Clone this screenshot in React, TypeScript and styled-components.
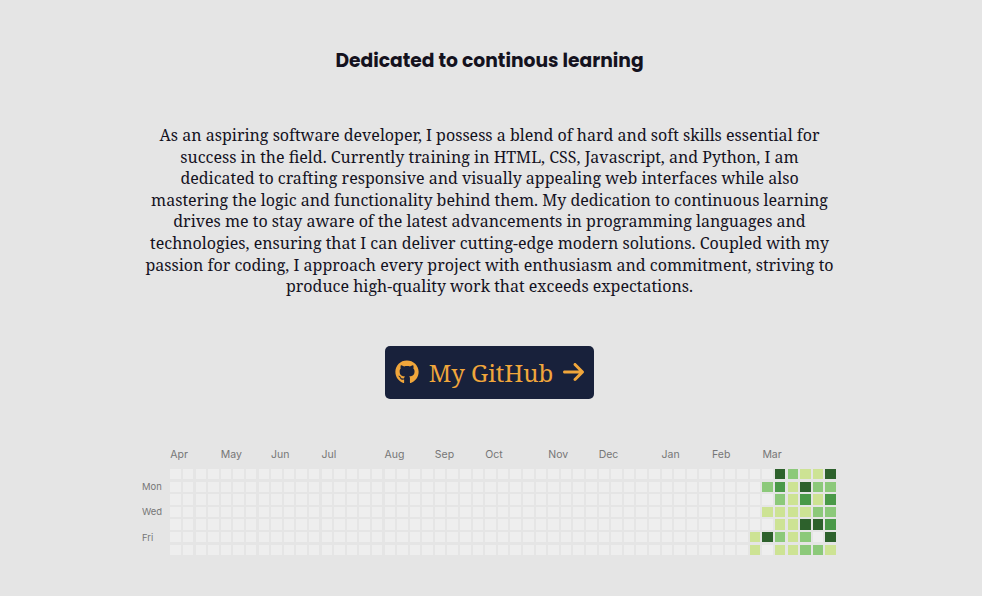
import React from "react";
import styled, { createGlobalStyle } from "styled-components";
import { FaArrowRight, FaGithub } from "react-icons/fa6";

const GlobalStyle = createGlobalStyle`
  body {
    margin: 0;
    background: #e5e5e5;
    color: #14121e;
    font-family: "Noto Serif", "Droid Serif", "Liberation Serif", serif;
  }
`;

const Section = styled.section`
  display: flex;
  flex-direction: column;
  align-items: center;
  padding: 46px 3px 36px 0;
`;

const Title = styled.h3`
  margin: 0;
  font-family: Poppins, "Inter", sans-serif;
  font-weight: 700;
  line-height: 30px;
  text-align: center;
`;

const Intro = styled.p`
  max-width: 692px;
  margin: 49px 0 48px;
  font-size: 16px;
  line-height: 1.35;
  text-align: center;
`;

const GithubLink = styled.a`
  display: inline-flex;
  align-items: center;
  gap: 10px;
  padding: 8px 10px;
  border-radius: 5px;
  background: #18213b;
  color: #f0a63b;
  font-size: 24px;
  line-height: 37px;
  text-decoration: none;
`;

const Arrow = styled(FaArrowRight)`
  width: 21px;
`;

const Chart = styled.svg`
  display: block;
  width: 100%;
  max-width: 696px;
  margin-top: 49px;
`;

const ChartLabel = styled.text<{ $small?: boolean }>`
  fill: #767676;
  font-family: "Inter", sans-serif;
  font-size: ${({ $small }) => ($small ? 9 : 10)}px;
`;

const Day = styled.rect`
  shape-rendering: crispEdges;
`;

const LEVELS = ["#eeeeee", "#cde394", "#8cc97a", "#4a9948", "#2d612c"];
const WEEKS = 53;
const PITCH = 12;
const LEFT = 27;
const TOP = 20;

const MONTHS: [string, number][] = [
  ["Apr", 0], ["May", 4], ["Jun", 8], ["Jul", 12], ["Aug", 17], ["Sep", 21],
  ["Oct", 25], ["Nov", 30], ["Dec", 34], ["Jan", 39], ["Feb", 43], ["Mar", 47],
];

const WEEKDAYS: [string, number][] = [["Mon", 40], ["Wed", 64], ["Fri", 89]];

/* Activity level per weekday for the most recent weeks; earlier weeks are empty. */
const RECENT = [
  [0, 0, 4, 2, 1, 1, 4],
  [0, 2, 3, 1, 4, 2, 2],
  [0, 0, 2, 1, 3, 1, 3],
  [0, 1, 1, 1, 1, 2, 2],
  [0, 0, 1, 1, 4, 4, 3],
  [1, 4, 2, 1, 2, 0, 4],
  [1, 0, 1, 1, 2, 2, 1],
];

function ContributionChart() {
  return (
    <Chart viewBox="0 0 663 104" role="img" aria-label="GitHub contributions">
      {MONTHS.map(([name, week]) => (
        <ChartLabel key={name} x={LEFT + week * PITCH} y={10}>{name}</ChartLabel>
      ))}
      {WEEKDAYS.map(([name, y]) => (
        <ChartLabel key={name} $small x={0} y={y}>{name}</ChartLabel>
      ))}
      {RECENT.map((levels, row) =>
        Array.from({ length: WEEKS }, (_, week) => (
          <Day
            key={`${row}-${week}`}
            x={LEFT + week * PITCH}
            y={TOP + row * PITCH}
            width={10}
            height={10}
            fill={LEVELS[levels[week - (WEEKS - levels.length)] ?? 0]}
          />
        ))
      )}
    </Chart>
  );
}

export default function App() {
  return (
    <>
      <GlobalStyle />
      <Section>
        <Title>Dedicated to continous learning</Title>
        <Intro>
          As an aspiring software developer, I possess a blend of hard and soft skills essential for
          success in the field. Currently training in HTML, CSS, Javascript, and Python, I am
          dedicated to crafting responsive and visually appealing web interfaces while also
          mastering the logic and functionality behind them. My dedication to continuous learning
          drives me to stay aware of the latest advancements in programming languages and
          technologies, ensuring that I can deliver cutting-edge modern solutions. Coupled with my
          passion for coding, I approach every project with enthusiasm and commitment, striving to
          produce high-quality work that exceeds expectations.
        </Intro>
        <GithubLink href="#github">
          <FaGithub aria-hidden />
          <span>My GitHub</span>
          <Arrow aria-hidden />
        </GithubLink>
        <ContributionChart />
      </Section>
    </>
  );
}
